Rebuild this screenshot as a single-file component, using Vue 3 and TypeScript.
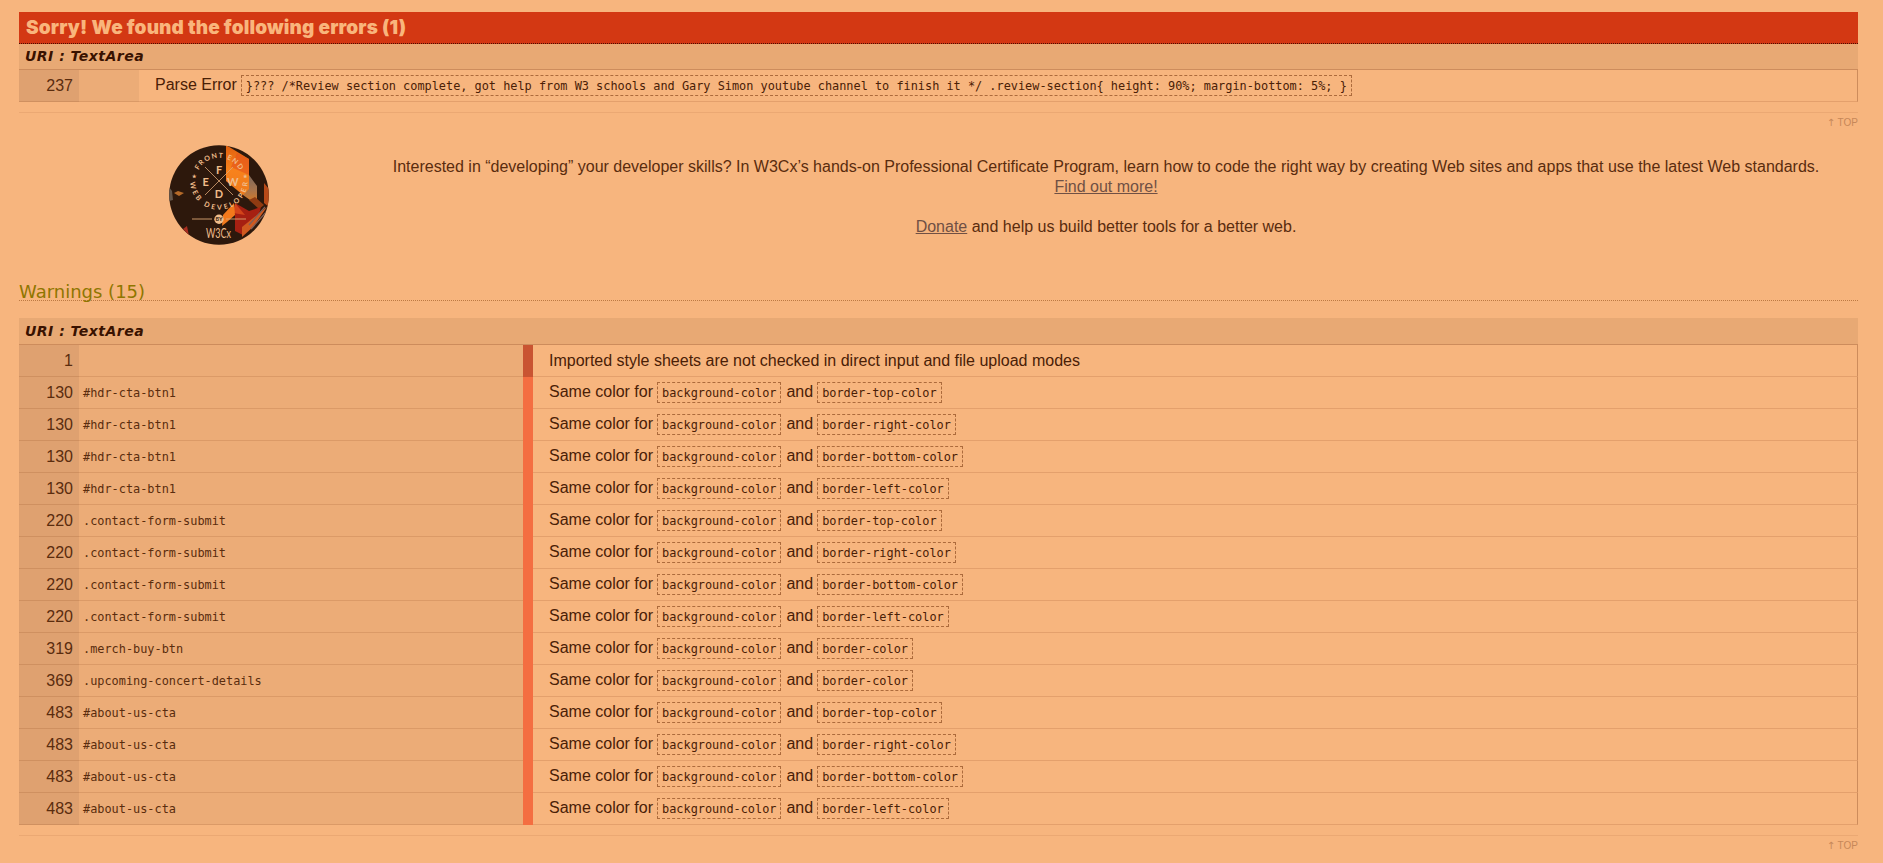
<script setup lang="ts">
interface Warning {
  line: number
  context: string
  props: string[]
}

const errorCode =
  '}??? /*Review section complete, got help from W3 schools and Gary Simon youtube channel to finish it */ .review-section{ height: 90%; margin-bottom: 5%; }'

const sides = ['border-top-color', 'border-right-color', 'border-bottom-color', 'border-left-color']

function perSide(line: number, context: string): Warning[] {
  return sides.map((side) => ({ line, context, props: ['background-color', side] }))
}

const warnings: Warning[] = [
  { line: 1, context: '', props: [] },
  ...perSide(130, '#hdr-cta-btn1'),
  ...perSide(220, '.contact-form-submit'),
  { line: 319, context: '.merch-buy-btn', props: ['background-color', 'border-color'] },
  { line: 369, context: '.upcoming-concert-details', props: ['background-color', 'border-color'] },
  ...perSide(483, '#about-us-cta'),
]
</script>

<template>
  <main class="report">
    <section class="errors">
      <h2 class="error-title"><span>Sorry! We found the following errors (1)</span></h2>
      <h3 class="uri"><span>URI : TextArea</span></h3>
      <div class="row error-row">
        <div class="line">237</div>
        <div class="context"></div>
        <div class="message"><span class="msg">Parse Error</span><code class="chip">{{ errorCode }}</code></div>
      </div>
      <p class="top"><a><span class="arrow">↑</span> TOP</a></p>
    </section>

    <section class="promo">
      <svg class="badge" viewBox="0 0 100 100" width="100" height="100">
        <defs>
          <clipPath id="disc"><circle cx="50" cy="50" r="49.8" /></clipPath>
          <linearGradient id="flame" x1="0" y1="0" x2="0" y2="1">
            <stop offset="0" stop-color="#e0600f" />
            <stop offset="0.5" stop-color="#f8821c" />
            <stop offset="1" stop-color="#ee7a1c" />
          </linearGradient>
          <linearGradient id="side" x1="0" y1="0" x2="0" y2="1">
            <stop offset="0" stop-color="#7d685a" />
            <stop offset="0.5" stop-color="#a8744c" />
            <stop offset="1" stop-color="#e07a1c" />
          </linearGradient>
          <path id="arcTop" d="M26.8 36 A23.2 23.2 0 0 1 73.2 36" />
          <path id="arcBottom" d="M21.2 36 A28.8 28.8 0 0 0 78.8 36" />
        </defs>
        <g clip-path="url(#disc)">
          <rect width="100" height="100" fill="#2d180c" />
          <path d="M57 0 L80 14 L80 50 L74 50 L57 36 Z" fill="url(#flame)" />
          <path d="M68 8 L80 14 L80 30 L62 22 Z" fill="#e5521a" opacity="0.6" />
          <path d="M80 30 L88 41 L88 60 L74 50 L80 44 Z" fill="url(#side)" />
          <path d="M86 52 L95 60 L90 64 L80 55 Z" fill="#8f3b12" />
          <path d="M95 38 L100 44 L100 62 L95 58 Z" fill="#b84a18" />
          <path d="M66 58 L80 66 L92 62 L88 76 L74 90 L66 86 Z" fill="#a62012" />
          <path d="M66 58 L76 70 L64 68 Z" fill="#d3441a" />
          <path d="M65 58 L66 70 L58 77 L53 81 L54 70 Z" fill="#f2791c" />
          <path d="M98 62 L73 82 L73 92 L84 82 Z" fill="#d05a20" />
          <path d="M96 62 L80 80 M99 65 L82 84" stroke="#806058" stroke-width="1.3" />
          <path d="M5 48 L9 46 L15 48 L10 51 Z" fill="#b56a29" />
          <path d="M0 42 L3 46 L4 55 L0 56 Z" fill="#65574c" />
          <path d="M14 84 L18 81 L20 91 Z" fill="#a72e20" />
        </g>
        <g class="badge-text">
          <text font-size="7"><textPath href="#arcTop" startOffset="50%" textLength="50">FRONT END</textPath></text>
          <text font-size="7"><textPath href="#arcBottom" startOffset="50%" textLength="88">WEB DEVELOPER</textPath></text>
          <text x="50" y="29" font-size="11">F</text>
          <text x="36.7" y="41" font-size="11">E</text>
          <text x="63.7" y="41" font-size="11">W</text>
          <text x="50" y="53.3" font-size="11">D</text>
          <text x="25" y="33" font-size="5">★</text>
          <text x="75.5" y="33" font-size="5">★</text>
          <path d="M36 22 L64 50 M64 22 L36 50" stroke="#dca675" stroke-width="0.8" />
          <path d="M23 74 H43 M57 74 H77" stroke="#dca675" stroke-width="0.9" />
          <circle cx="50" cy="74.2" r="4.7" fill="#f0bd8b" />
          <text x="50" y="76.2" font-size="5.4" class="by">BY</text>
          <text x="49.4" y="92.6" font-size="13.5" class="w3c" textLength="25" lengthAdjust="spacingAndGlyphs">W3Cx</text>
        </g>
      </svg>
      <div class="promo-text">
        <p>Interested in “developing” your developer skills? In W3Cx’s hands-on Professional Certificate Program, learn how to code the right way by creating Web sites and apps that use the latest Web standards. <a>Find out more!</a></p>
        <p><a>Donate</a> and help us build better tools for a better web.</p>
      </div>
    </section>

    <section class="warnings">
      <h2 class="warning-title"><span>Warnings (15)</span></h2>
      <h3 class="uri tall"><span>URI : TextArea</span></h3>
      <div v-for="(w, i) in warnings" :key="i" class="row warning-row" :class="{ first: i === 0 }">
        <div class="line">{{ w.line }}</div>
        <div class="context">{{ w.context }}</div>
        <div class="level"></div>
        <div class="message">
          <span v-if="!w.props.length">Imported style sheets are not checked in direct input and file upload modes</span>
          <template v-else>
            <span class="msg">Same color for</span><code class="chip">{{ w.props[0] }}</code><span class="msg">and</span><code class="chip">{{ w.props[1] }}</code>
          </template>
        </div>
      </div>
      <p class="top"><a><span class="arrow">↑</span> TOP</a></p>
    </section>
  </main>
</template>

<style>
body {
  background: #f7b57e;
  overflow: hidden;
}
</style>

<style scoped>
.report {
  box-sizing: border-box;
  height: 863px;
  padding: 12px 25px 0 19px;
  font: 16px/20px "Liberation Sans", Arial, sans-serif;
  color: #5a2c0e;
}
h2,
h3,
p {
  margin: 0;
}
.error-title {
  height: 31px;
  padding-left: 7px;
  background: #d33813;
  border-bottom: 1px dotted #4a0d00;
  color: #f9b57c;
  font: 900 19px/31px Inter, "Liberation Sans", sans-serif;
  letter-spacing: 0.14px;
}
.uri {
  box-sizing: border-box;
  height: 26px;
  padding-left: 6px;
  background: #e8a974;
  border-bottom: 1px solid #cd8c5c;
  color: #391200;
  font: italic 700 14px/25px "DejaVu Sans", Verdana, sans-serif;
  letter-spacing: 0.48px;
}
.uri.tall {
  height: 27px;
  line-height: 26px;
}
.row {
  display: grid;
  height: 32px;
}
.error-row {
  grid-template-columns: 60px 60px 1fr;
}
.warning-row {
  grid-template-columns: 60px 444px 10px 1fr;
}
.line,
.context,
.message {
  box-sizing: border-box;
  height: 32px;
  border-bottom: 1px solid #d9995f;
}
.line {
  padding-right: 6px;
  background: #dfa170;
  border-bottom-color: #cf9060;
  text-align: right;
  line-height: 32px;
}
.context {
  padding-left: 4px;
  background: #ecac77;
  border-bottom-color: #db9a67;
  font: 11.89px/33px "DejaVu Sans Mono", monospace;
}
.level {
  background: #f46e41;
}
.first .level {
  background: #c95432;
}
.message {
  display: flex;
  align-items: center;
  padding-left: 16px;
  border-right: 1px solid #cd8c5c;
  border-bottom-color: #e4a06c;
  color: #4a2006;
}
.msg {
  line-height: 20px;
  padding-bottom: 2px;
}
.chip {
  box-sizing: border-box;
  height: 21px;
  padding: 0 4px;
  margin: 0 5px 0 4px;
  border: 1px dashed #ad6b3c;
  font: 11.89px/20px "DejaVu Sans Mono", monospace;
}
.top {
  margin-top: 10px;
  border-top: 1px solid #eba873;
  text-align: right;
  font-size: 10px;
  line-height: 20px;
  height: 21px;
  color: #c68759;
}
.arrow {
  font-family: "Noto Sans", "DejaVu Sans", sans-serif;
  line-height: 1;
}
.promo {
  display: flex;
  height: 141px;
}
.badge {
  flex: none;
  margin: 11px 84px 0 150px;
}
.badge-text {
  fill: #f0bd8b;
  font-family: Lato, sans-serif;
  font-weight: 700;
  text-anchor: middle;
}
.badge-text .by {
  fill: #2d180c;
}
.badge-text .w3c {
  font-weight: 400;
}
.promo-text {
  flex: 1;
  padding: 23px 29px 0 30px;
  text-align: center;
}
.promo-text p {
  margin-bottom: 20px;
}
.promo-text a {
  color: #705044;
  text-decoration: underline;
}
.warning-title {
  box-sizing: border-box;
  height: 26px;
  margin-bottom: 17px;
  border-bottom: 1px dotted #bd7a43;
  color: #8f7600;
  font: 400 18px/34px "DejaVu Sans", Verdana, sans-serif;
}
</style>
